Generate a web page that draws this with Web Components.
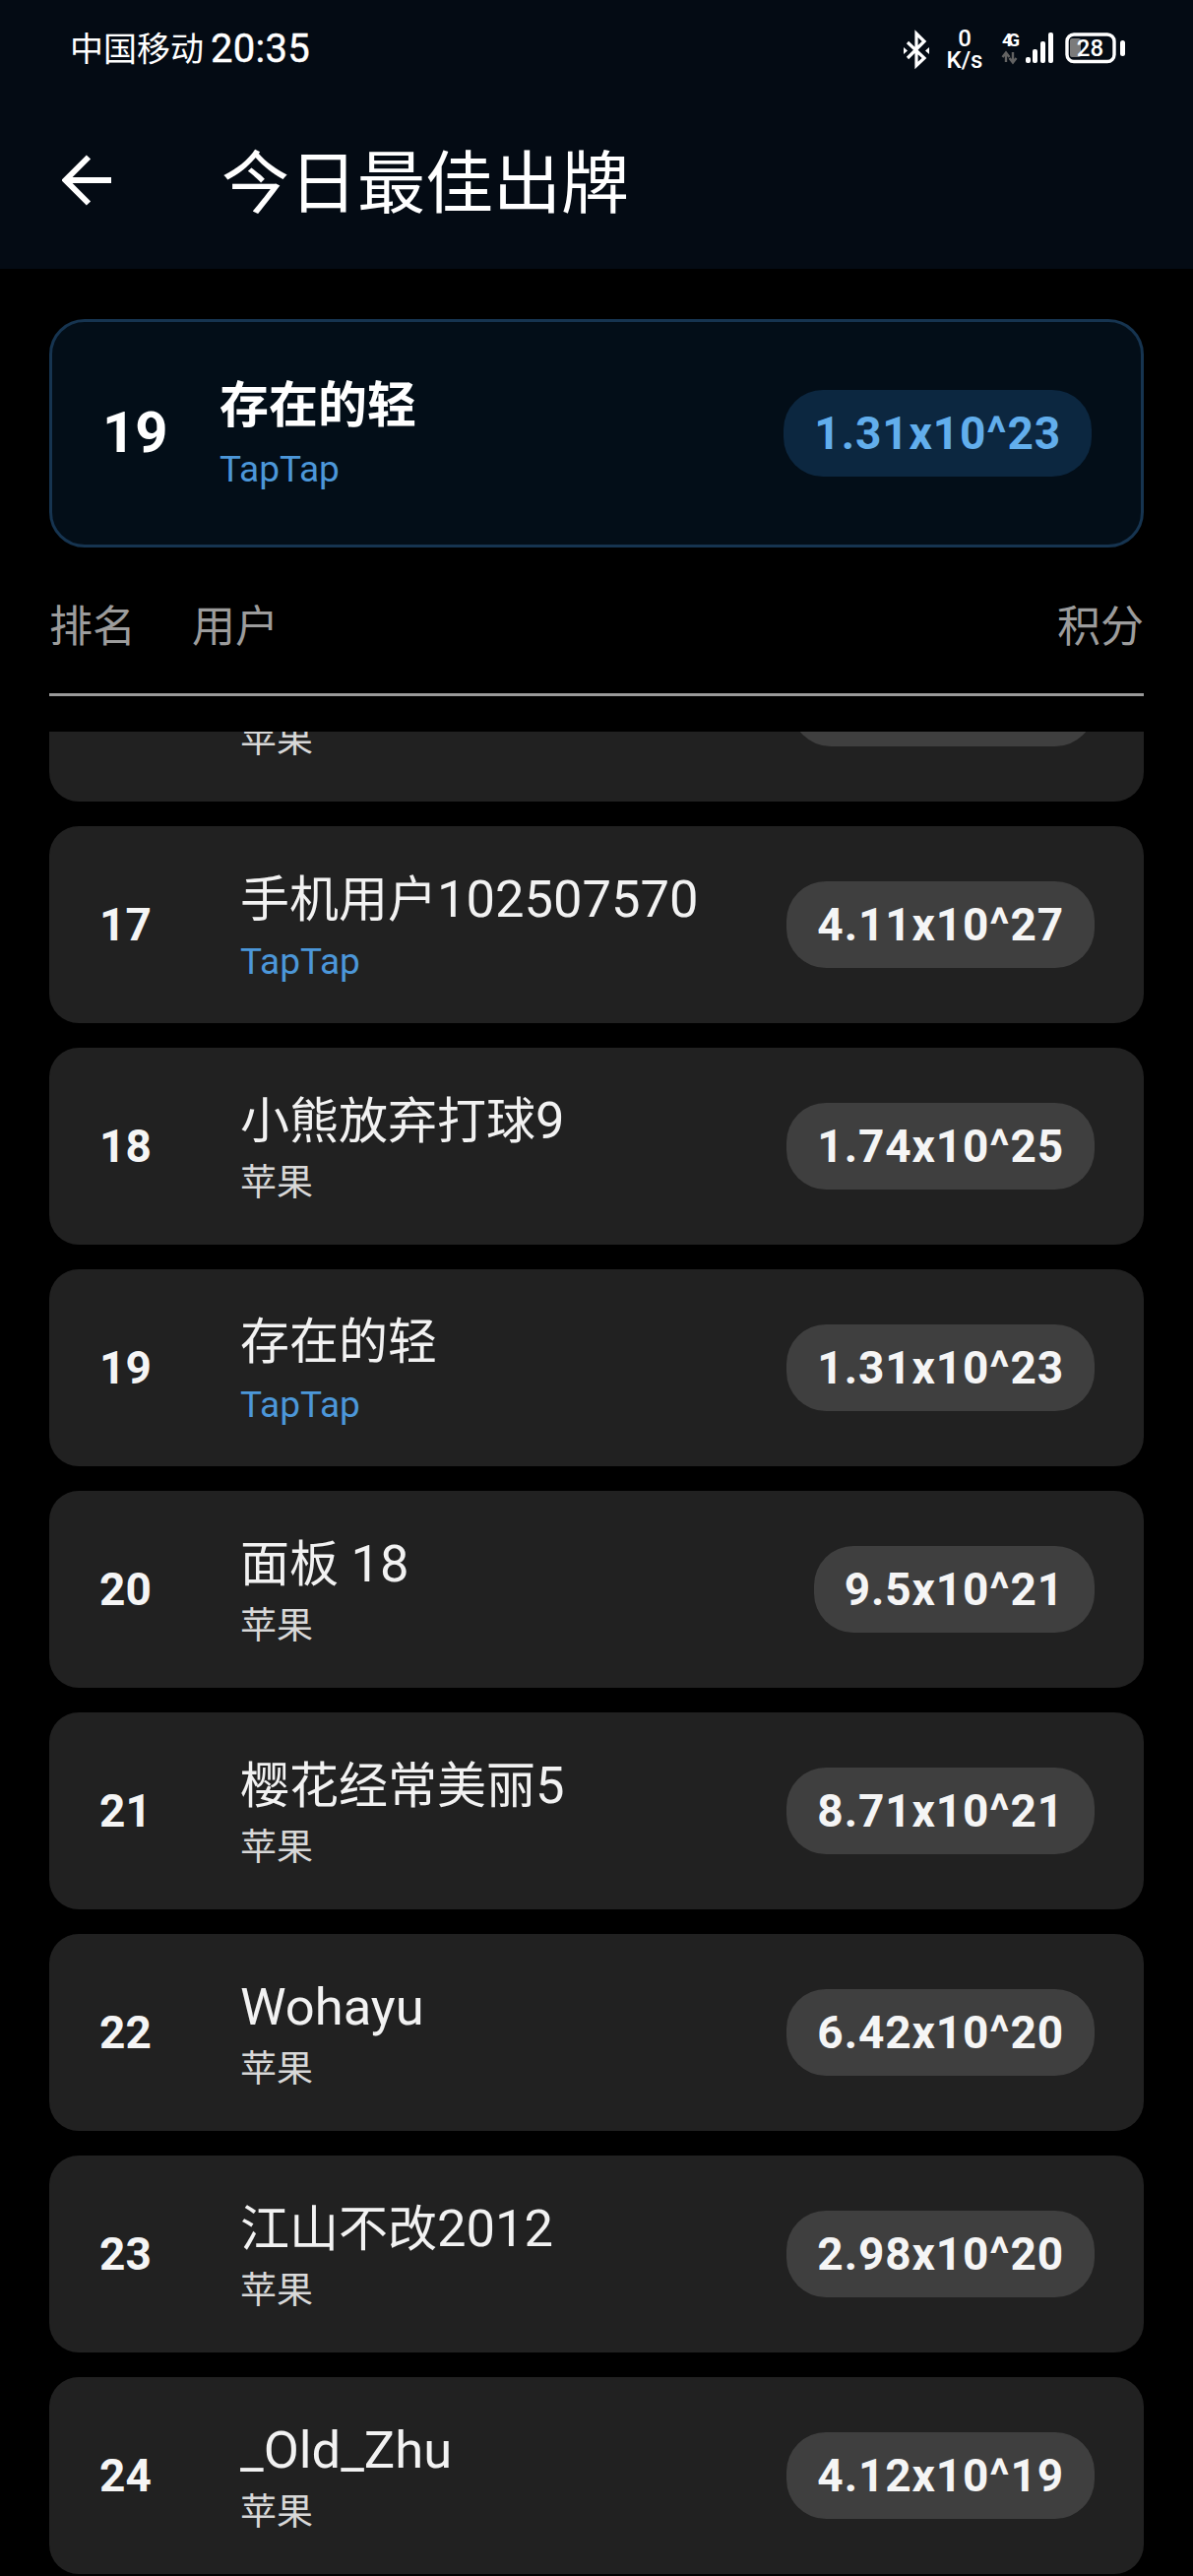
<!DOCTYPE html>
<html lang="zh-CN"><head><meta charset="utf-8"><title>今日最佳出牌</title>
<style>
html,body{margin:0;padding:0;background:#000;height:2616px;overflow:hidden}
body{font-family:Roboto,"Noto Sans CJK SC",sans-serif;color:#fff}
best-page{display:block}
i.l{font-style:normal;font-size:52.5px}
</style></head><body>
<template id="t-status"><style>
:host{display:flex;align-items:center;justify-content:space-between;height:100px;padding:0 65px 0 71px;font-size:34px;line-height:1;color:#fff}
.left{display:flex;align-items:center;gap:7px}
.time{font-size:40px;font-weight:400;letter-spacing:.3px;-webkit-text-stroke:.4px #fff}
.right{display:flex;align-items:center}
.speed{width:44px;margin:0 13px 0 11px;text-align:center;font:500 24px/22px Roboto,sans-serif}
svg{display:block;overflow:visible}
</style><div class="left"><span>中国移动</span><span class="time">20:35</span></div>
<div class="right">
<svg width="32" height="44" viewBox="0 0 32 44" fill="none" stroke="#fff" stroke-width="3.2"><path d="M7 15 L24 31 L16 38.500 V6 L24 14 L7 31"/><path d="M3 20 L7 23.500 L3 27zM29 20 L25 23.500 L29 27z" fill="#fff" stroke="none"/></svg>
<div class="speed">0<br>K/s</div>
<svg width="132" height="44" viewBox="0 0 132 44" fill="none" stroke="#fff" stroke-width="3.400">
<text x="3" y="19" font-family="Roboto" font-size="18" font-weight="700" fill="#fff" stroke="none" textLength="18">4G</text>
<path d="M7 35V26m-3.500 4L7 25.500 10.500 30M14 25v10m-3.500-4L14 35.500 17.500 31" stroke="#626262" stroke-width="2.400"/>
<g stroke="none" fill="#fff"><rect x="27" y="30" width="5" height="6" rx="2"/><rect x="34" y="22" width="5" height="14" rx="2"/><rect x="42" y="14" width="5" height="22" rx="2"/><rect x="50" y="5" width="5" height="31" rx="2"/></g>
<rect x="69" y="7" width="48" height="27.500" rx="7"/>
<rect x="72" y="11" width="11" height="19" rx="2" fill="#7b7b7b" stroke="none"/>
<text x="92.500" y="29" text-anchor="middle" font-family="Roboto" font-size="24" font-weight="500" fill="#fff" stroke="none">28</text>
<rect x="123" y="13" width="5" height="16" rx="2.500" fill="#fff" stroke="none"/>
</svg></div></template>

<template id="t-header"><style>
:host{display:block;background:#040b14;height:273px}
.bar{display:flex;align-items:center;height:166px;padding:0 0 0 63px}
svg{display:block;flex:none;margin-top:-1px}
h1{margin:-4px 0 0 110px;font:400 69px/1 "Noto Sans CJK SC",sans-serif;color:#fff}
</style><status-bar></status-bar><div class="bar">
<svg width="52" height="52" viewBox="0 0 52 52" fill="none" stroke="#fff" stroke-width="6"><path d="M50 26H4M27 2.500 3.500 26 27 49.500"/></svg>
<h1><slot></slot></h1></div></template>

<template id="t-pill"><style>
:host{display:inline-flex;align-items:center;justify-content:center;box-sizing:border-box;height:88px;min-width:var(--pill-min,0);padding:0 31px;border-radius:40px;background:var(--pill-bg,#3f3f3f);color:var(--pill-fg,#f5f5f5);font:700 46px/1 Roboto,sans-serif;letter-spacing:.9px}
</style><slot></slot></template>

<template id="t-row"><style>
:host{display:flex;align-items:center;box-sizing:border-box;height:200px;padding:0 50px 0 0;background:#212121;border-radius:30px;flex:none}
.rank{flex:none;width:194px;box-sizing:border-box;padding-left:51px;font:700 46px/1 Roboto,sans-serif;color:#f5f5f5}
.who{flex:1;min-width:0;display:flex;flex-direction:column}
.name{font:400 50px/64px Roboto,"Noto Sans CJK SC",sans-serif;color:#f2f2f2;height:64px;white-space:pre}
.src{font:400 37px/50px Roboto,"Noto Sans CJK SC",sans-serif;color:#d8d8d8;margin-top:7px;height:50px;margin-bottom:-4px}
:host([tap]) .src{color:#4c97d9}
</style><div class="rank"><slot name="rank"></slot></div><div class="who"><div class="name"><slot name="name"></slot></div><div class="src"><slot name="src"></slot></div></div><slot name="score"></slot></template>

<template id="t-pin"><style>
:host{display:flex;align-items:center;box-sizing:border-box;height:232px;margin:51px 50px 0 50px;padding:0 50px 0 0;background:#030e18;border:3px solid #163450;border-radius:36px;--pill-bg:#0c2740;--pill-fg:#62aeec}
.rank{flex:none;width:170px;box-sizing:border-box;padding-left:51px;font:700 58px/1 Roboto,sans-serif;color:#fff;margin-top:-2px}
.who{flex:1;display:flex;flex-direction:column;margin-top:-3px}
.name{font:700 50px/62px "Noto Sans CJK SC",sans-serif;color:#fff}
.src{font:400 37px/50px Roboto,sans-serif;color:#4c97d9;margin-top:14px}
</style><div class="rank"><slot name="rank"></slot></div><div class="who"><div class="name"><slot name="name"></slot></div><div class="src"><slot name="src"></slot></div></div><slot name="score"></slot></template>

<template id="t-head"><style>
:host{display:flex;align-items:center;box-sizing:border-box;height:151px;margin:0 50px;border-bottom:3px solid #9a9a9a;padding:5px 0 0 0;font:400 44px/1 "Noto Sans CJK SC",sans-serif;color:#9c9c9c;gap:57px}
.end{margin-left:auto}
</style><span><slot name="rank"></slot></span><span><slot name="user"></slot></span><span class="end"><slot name="score"></slot></span></template>

<template id="t-list"><style>
:host{display:block;margin:36px 50px 0 50px;height:1873px;overflow:hidden}
.inner{display:flex;flex-direction:column;gap:25px;margin-top:-129px}
</style><div class="inner"><slot></slot></div></template>

<best-page>
<app-header>今日最佳出牌</app-header>
<pinned-card><span slot="rank">19</span><span slot="name">存在的轻</span><span slot="src">TapTap</span><score-pill slot="score">1.31x10^23</score-pill></pinned-card>
<table-head><span slot="rank">排名</span><span slot="user">用户</span><span slot="score">积分</span></table-head>
<rank-list>
<rank-row><span slot="src">苹果</span><score-pill slot="score" style="--pill-min:308px"></score-pill></rank-row>
<rank-row tap><span slot="rank">17</span><span slot="name">手机用户<i class="l">102507570</i></span><span slot="src">TapTap</span><score-pill slot="score">4.11x10^27</score-pill></rank-row>
<rank-row><span slot="rank">18</span><span slot="name">小熊放弃打球<i class="l">9</i></span><span slot="src">苹果</span><score-pill slot="score">1.74x10^25</score-pill></rank-row>
<rank-row tap><span slot="rank">19</span><span slot="name">存在的轻</span><span slot="src">TapTap</span><score-pill slot="score">1.31x10^23</score-pill></rank-row>
<rank-row><span slot="rank">20</span><span slot="name">面板 <i class="l">18</i></span><span slot="src">苹果</span><score-pill slot="score">9.5x10^21</score-pill></rank-row>
<rank-row><span slot="rank">21</span><span slot="name">樱花经常美丽<i class="l">5</i></span><span slot="src">苹果</span><score-pill slot="score">8.71x10^21</score-pill></rank-row>
<rank-row><span slot="rank">22</span><span slot="name"><i class="l">Wohayu</i></span><span slot="src">苹果</span><score-pill slot="score">6.42x10^20</score-pill></rank-row>
<rank-row><span slot="rank">23</span><span slot="name">江山不改<i class="l">2012</i></span><span slot="src">苹果</span><score-pill slot="score">2.98x10^20</score-pill></rank-row>
<rank-row><span slot="rank">24</span><span slot="name"><i class="l">_Old_Zhu</i></span><span slot="src">苹果</span><score-pill slot="score">4.12x10^19</score-pill></rank-row>
</rank-list>
</best-page>
<script>
const reg=(tag,id)=>customElements.define(tag,class extends HTMLElement{constructor(){super();this.attachShadow({mode:"open"}).appendChild(document.getElementById(id).content.cloneNode(true))}});
reg("status-bar","t-status");reg("app-header","t-header");reg("score-pill","t-pill");reg("rank-row","t-row");reg("pinned-card","t-pin");reg("table-head","t-head");reg("rank-list","t-list");
</script>
</body></html>
